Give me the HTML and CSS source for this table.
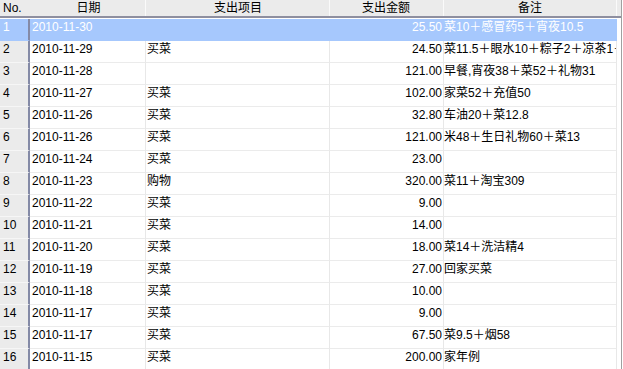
FILE: index.html
```html
<!DOCTYPE html>
<html>
<head>
<meta charset="utf-8">
<link rel="stylesheet" href="styles.css">
</head>
<body>
<div class="grid">
  <div class="head">
    <div class="c no">No.</div>
    <div class="c date hc">日期</div>
    <div class="c item hc">支出项目</div>
    <div class="c amt hc">支出金额</div>
    <div class="c note hc">备注</div>
    <div class="c fill"></div>
  </div>
  <div class="body">
    <div class="row sel"><div class="c no">1</div><div class="c date">2010-11-30</div><div class="c item"></div><div class="c amt">25.50</div><div class="c note">菜10＋感冒药5＋宵夜10.5</div></div>
    <div class="row"><div class="c no">2</div><div class="c date">2010-11-29</div><div class="c item">买菜</div><div class="c amt">24.50</div><div class="c note">菜11.5＋眼水10＋粽子2＋凉茶1＋</div></div>
    <div class="row"><div class="c no">3</div><div class="c date">2010-11-28</div><div class="c item"></div><div class="c amt">121.00</div><div class="c note">早餐,宵夜38＋菜52＋礼物31</div></div>
    <div class="row"><div class="c no">4</div><div class="c date">2010-11-27</div><div class="c item">买菜</div><div class="c amt">102.00</div><div class="c note">家菜52＋充值50</div></div>
    <div class="row"><div class="c no">5</div><div class="c date">2010-11-26</div><div class="c item">买菜</div><div class="c amt">32.80</div><div class="c note">车油20＋菜12.8</div></div>
    <div class="row"><div class="c no">6</div><div class="c date">2010-11-26</div><div class="c item">买菜</div><div class="c amt">121.00</div><div class="c note">米48＋生日礼物60＋菜13</div></div>
    <div class="row"><div class="c no">7</div><div class="c date">2010-11-24</div><div class="c item">买菜</div><div class="c amt">23.00</div><div class="c note"></div></div>
    <div class="row"><div class="c no">8</div><div class="c date">2010-11-23</div><div class="c item">购物</div><div class="c amt">320.00</div><div class="c note">菜11＋淘宝309</div></div>
    <div class="row"><div class="c no">9</div><div class="c date">2010-11-22</div><div class="c item">买菜</div><div class="c amt">9.00</div><div class="c note"></div></div>
    <div class="row"><div class="c no">10</div><div class="c date">2010-11-21</div><div class="c item">买菜</div><div class="c amt">14.00</div><div class="c note"></div></div>
    <div class="row"><div class="c no">11</div><div class="c date">2010-11-20</div><div class="c item">买菜</div><div class="c amt">18.00</div><div class="c note">菜14＋洗洁精4</div></div>
    <div class="row"><div class="c no">12</div><div class="c date">2010-11-19</div><div class="c item">买菜</div><div class="c amt">27.00</div><div class="c note">回家买菜</div></div>
    <div class="row"><div class="c no">13</div><div class="c date">2010-11-18</div><div class="c item">买菜</div><div class="c amt">10.00</div><div class="c note"></div></div>
    <div class="row"><div class="c no">14</div><div class="c date">2010-11-17</div><div class="c item">买菜</div><div class="c amt">9.00</div><div class="c note"></div></div>
    <div class="row"><div class="c no">15</div><div class="c date">2010-11-17</div><div class="c item">买菜</div><div class="c amt">67.50</div><div class="c note">菜9.5＋烟58</div></div>
    <div class="row"><div class="c no">16</div><div class="c date">2010-11-15</div><div class="c item">买菜</div><div class="c amt">200.00</div><div class="c note">家年例</div></div>
  </div>
</div>
</body>
</html>
```
FILE: styles.css
```css
html, body {
  margin: 0;
  padding: 0;
  background: #ffffff;
}
body {
  width: 623px;
  height: 369px;
  overflow: hidden;
  font-family: "Liberation Sans", "Noto Sans CJK SC", sans-serif;
  font-size: 12px;
  color: #000;
}
.grid {
  width: 621px;
  height: 369px;
  border-right: 1px solid #a0a0a0;
  overflow: hidden;
  display: flex;
  flex-direction: column;
}
.head {
  display: flex;
  height: 16px;
  background: #ebebeb;
  border-bottom: 2px solid #8e8fa0;
  flex: none;
}
.head .c {
  line-height: 16px;
  height: 16px;
  border-right: 1px solid #fafafa;
}
.head .hc {
  text-align: center;
}
.head .no {
  border-right: 2px solid #ebebeb;
}
.head .fill {
  flex: 1;
  border-right: none;
}
.body {
  flex: 1;
  overflow: hidden;
  background: linear-gradient(#ebebeb, #ebebeb) 0 0 / 28px 100% no-repeat;
  border-top: 1px solid #ffffff;
}
.row {
  display: flex;
  height: 22px;
}
.c {
  box-sizing: border-box;
  white-space: nowrap;
  overflow: hidden;
  flex: none;
}
.row .c {
  height: 22px;
  line-height: 17px;
  border-bottom: 1px solid #ebebeb;
  border-right: 1px solid #e8e8e8;
}
.no {
  width: 30px;
  padding-left: 3px;
}
.row .no {
  background: #ebebeb;
  border-right: 2px solid #848aa6;
  border-bottom: 1px solid #f6f6f6;
}
.date {
  width: 116px;
  padding-left: 2px;
}
.item {
  width: 184px;
  padding-left: 1px;
}
.amt {
  width: 114px;
  text-align: right;
  padding-right: 1px;
}
.note {
  width: 173px;
  padding-left: 0;
}
.row.sel .c {
  background: #a6c8fd;
  color: #ffffff;
  border-bottom-color: #a6c8fd;
}
.row.sel .no {
  border-right-color: #848aa6;
}
.row.sel .c:not(.no) {
  border-right-color: #a6c8fd;
}
```
